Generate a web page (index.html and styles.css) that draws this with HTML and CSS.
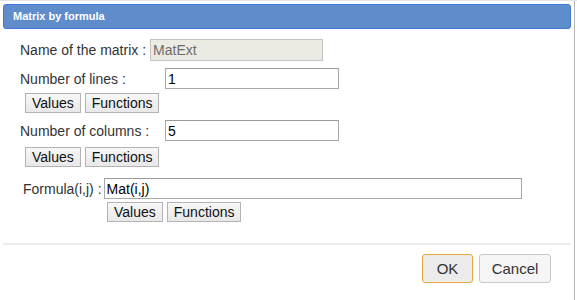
FILE: index.html
```html
<!DOCTYPE html>
<html>
<head>
  <title>Matrix by formula</title>
  <link rel="stylesheet" href="styles.css">
</head>
<body>
  <div class="dialog">
    <div class="titlebar">Matrix by formula</div>

    <div class="content">
      <div class="row row-name">
        <span class="label">Name of the matrix :</span>
        <input class="field field-name" type="text" value="MatExt" disabled>
      </div>

      <div class="row row-lines">
        <span class="label label-wide">Number of lines :</span>
        <input class="field" type="text" value="1">
      </div>
      <div class="btn-row btn-row-lines">
        <button class="small-btn">Values</button>
        <button class="small-btn">Functions</button>
      </div>

      <div class="row row-columns">
        <span class="label label-wide">Number of columns :</span>
        <input class="field" type="text" value="5">
      </div>
      <div class="btn-row btn-row-columns">
        <button class="small-btn">Values</button>
        <button class="small-btn">Functions</button>
      </div>

      <div class="formula">
        <div class="row row-formula">
          <span class="label label-formula">Formula(i,j) :</span>
          <input class="field field-formula" type="text" value="Mat(i,j)">
        </div>
        <div class="btn-row btn-row-formula">
          <button class="small-btn">Values</button>
          <button class="small-btn">Functions</button>
        </div>
      </div>
    </div>

    <div class="footer">
      <button class="dlg-btn ok-btn">OK</button>
      <button class="dlg-btn">Cancel</button>
    </div>
  </div>
</body>
</html>
```

FILE: styles.css
```css
html, body {
  margin: 0;
  padding: 0;
  background: #fff;
  overflow: hidden;
}

body {
  font-family: "Liberation Sans", Arial, sans-serif;
  border-top: 1px solid #e4e4e4;
}

.dialog {
  width: 575px;
  height: 299px;
  box-sizing: border-box;
  border-right: 1px solid #b5b5b5;
  padding: 3px 3px 0 3px;
}

.titlebar {
  height: 23px;
  background-color: #5f8dcc;
  border: 1px solid #3f78d8;
  border-radius: 3px;
  color: #fff;
  font-size: 11px;
  font-weight: bold;
  line-height: 23px;
  padding-left: 9px;
}

.content {
  padding-left: 17px;
  color: #333;
  font-size: 14px;
}

.row {
  display: flex;
  align-items: center;
}

.label {
  margin-right: 4px;
}
.label-wide {
  width: 145px;
  margin-right: 0;
}
.label-formula {
  margin-right: 2px;
}

.field {
  width: 174px;
  height: 21px;
  box-sizing: border-box;
  border: 1px solid #a9a9a9;
  border-top-color: #9a9a9a;
  padding: 0 2px;
  margin: 0;
  font-family: "Liberation Sans", Arial, sans-serif;
  font-size: 14px;
  color: #000;
  background: #fff;
}
.field-name {
  width: 173px;
  height: 22px;
  background: #ebebe4;
  border-color: #c4c4c4;
  color: #6d6d6d;
}
.field-formula {
  width: 418px;
}

.btn-row {
  display: flex;
  gap: 4px;
  padding-left: 5px;
}

.small-btn {
  height: 20px;
  box-sizing: border-box;
  padding: 0 6px;
  margin: 0;
  border: 1px solid #b3b3b3;
  border-radius: 0;
  background: linear-gradient(#f7f7f7, #e8e8e8);
  font-family: "Liberation Sans", Arial, sans-serif;
  font-size: 14px;
  color: #111;
}

.row-name { margin-top: 10px; }
.row-lines { margin-top: 7px; }
.btn-row-lines { margin-top: 4px; }
.row-columns { margin-top: 7px; }
.btn-row-columns { margin-top: 6px; }
.formula {
  margin-top: 11px;
  padding-left: 3px;
}
.btn-row-formula {
  margin-top: 3px;
  padding-left: 84px;
}

.footer {
  margin-top: 21px;
  border-top: 2px solid #ececec;
  display: flex;
  justify-content: flex-end;
  gap: 6px;
  padding: 9px 20px 0 0;
}

.dlg-btn {
  width: 72px;
  height: 29px;
  padding: 0;
  margin: 0;
  border: 1px solid #c8c8c8;
  border-radius: 3px;
  background: #f5f5f5;
  color: #333;
  font-family: "Liberation Sans", Arial, sans-serif;
  font-size: 15px;
}
.ok-btn {
  width: 51px;
  border-color: #e6a83e;
  background: #ebebeb;
}
```
